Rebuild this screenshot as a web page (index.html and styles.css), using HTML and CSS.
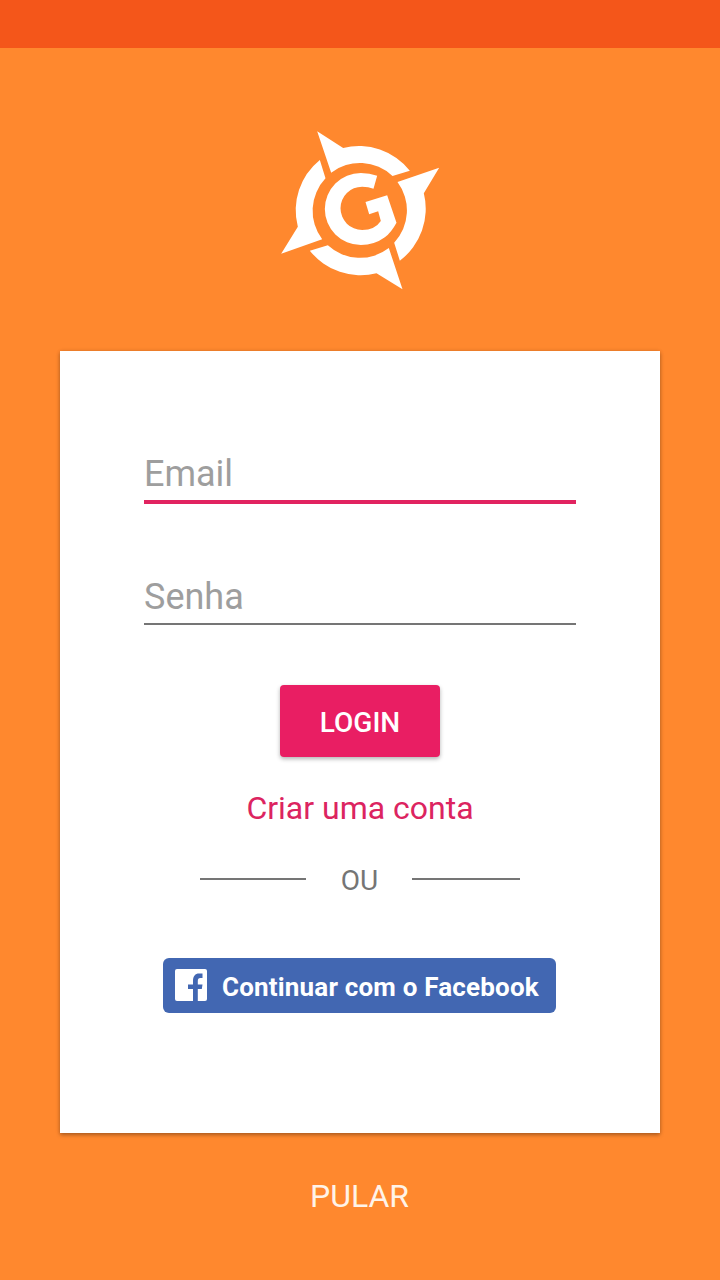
FILE: index.html
```html
<!DOCTYPE html>
<html lang="pt-BR">
<head>
  <meta charset="UTF-8">
  <meta name="viewport" content="width=device-width, initial-scale=1.0">
  <title>Login</title>
  <link rel="stylesheet" href="styles.css">
  <meta name="theme-color" content="#F4561A">
</head>
<body>
  <div class="status-bar"></div>

  <main class="login-page">
    <!-- Logo -->
    <svg class="logo" viewBox="0.5 0 540 540" fill="#fff">
      <path d="M142 34L220 84A194 194 0 0 1 420 152L368 168A142 142 0 0 0 184 158Z"/>
      <path d="M508 143L462 220A194 194 0 0 1 390 422L373 368A142 142 0 0 0 383 186Z"/>
      <path d="M398 508L320 460A194 194 0 0 1 120 392L174 376A142 142 0 0 0 357 384Z"/>
      <path d="M34 401L84 320A194 194 0 0 1 150 120L167 175A142 142 0 0 0 157 358Z"/>
      <path d="M322 167Q300 159 273 159A108 108 0 0 0 165 267A108 108 0 0 0 273 375Q314 375 345 352Q365 336 380 308L352 226L287 246L298 283L325 274L333 303Q315 330 277 330A65 65 0 0 1 277 200Q296 200 311 206Z"/>
    </svg>

    <!-- Login Card -->
    <form class="card">
      <input class="field field-active" type="email" placeholder="Email">
      <input class="field" type="password" placeholder="Senha">
      <button class="login-button" type="button">LOGIN</button>
      <a class="create-account">Criar uma conta</a>
      <div class="divider"><span>OU</span></div>
      <button class="facebook-button" type="button">
        <svg class="facebook-icon" viewBox="0 0 32 32">
          <rect width="32" height="32" rx="2" fill="#fff"/>
          <path d="M18 32V20H13V15.5H18V12C18 7 20.3 4.5 24 4.5H27.5V9H25.4C23.5 9 22.8 10 22.8 12V15.5H27.5L26.8 20H22.8V32Z" fill="#4267B2"/>
        </svg>
        <span>Continuar com o Facebook</span>
      </button>
    </form>

    <a class="skip">PULAR</a>
  </main>
</body>
</html>
```

FILE: styles.css
```css
:root {
  --main-bg: #FF882E;
  --accent: #E91E63;
}

* {
  box-sizing: border-box;
}

body {
  font-family: Roboto, sans-serif;
  margin: 0;
  background: var(--main-bg);
}

.status-bar {
  height: 48px;
  background: #F4561A;
}

.login-page {
  display: flex;
  flex-direction: column;
  align-items: center;
  height: 1232px;
  padding-top: 72px;
}

.logo {
  width: 180px;
  height: 180px;
  flex-shrink: 0;
}

/* Login Card */
.card {
  display: flex;
  flex-direction: column;
  align-items: center;
  width: 600px;
  height: 782px;
  margin-top: 51px;
  padding: 94px 84px 0;
  background: #fff;
  box-shadow: 0 2px 4px rgba(0, 0, 0, 0.3), 0 0 4px rgba(0, 0, 0, 0.1);
}

.field {
  width: 432px;
  height: 58px;
  margin-bottom: 63px;
  padding: 4px 0 0;
  border: none;
  border-bottom: 2px solid #757575;
  border-radius: 0;
  background: none;
  font-family: inherit;
  font-size: 36px;
  outline: none;
}

.field-active {
  height: 59px;
  padding-top: 2px;
  border-bottom: 4px solid #E12360;
}

.field::placeholder {
  color: #9E9E9E;
  opacity: 1;
}

.login-button {
  width: 160px;
  height: 72px;
  margin-top: -3px;
  padding: 2px 0 0;
  border: none;
  border-radius: 4px;
  background: var(--accent);
  color: #fff;
  font-family: inherit;
  font-size: 28px;
  font-weight: 500;
  box-shadow: 0 2px 4px rgba(0, 0, 0, 0.3);
}

.create-account {
  margin-top: 32px;
  color: #DC2460;
  font-size: 32px;
  line-height: 38px;
}

.divider {
  display: flex;
  align-items: center;
  justify-content: space-between;
  width: 320px;
  margin-top: 35px;
  color: #757575;
  font-size: 28px;
  line-height: 30px;
}

.divider span {
  padding: 4px 0 0 1px;
}

.divider::before,
.divider::after {
  content: "";
  width: 106px;
  height: 2px;
  background: #757575;
}

.divider::after {
  width: 108px;
}

.facebook-button {
  display: flex;
  align-items: center;
  width: 393px;
  height: 55px;
  margin: 62px 1px 0 0;
  padding: 0 0 0 12px;
  gap: 15px;
  border: none;
  border-radius: 6px;
  background: #4267B2;
  color: #fff;
  font-family: inherit;
  font-size: 26px;
  font-weight: 700;
  letter-spacing: 0.18px;
  white-space: nowrap;
}

.facebook-button span {
  padding-top: 2px;
}

.facebook-icon {
  width: 32px;
  height: 32px;
  margin-bottom: 2px;
  flex-shrink: 0;
}

.skip {
  margin: 44px 1px 0 0;
  color: #FFF3E8;
  font-size: 32px;
  line-height: 38px;
}
```
